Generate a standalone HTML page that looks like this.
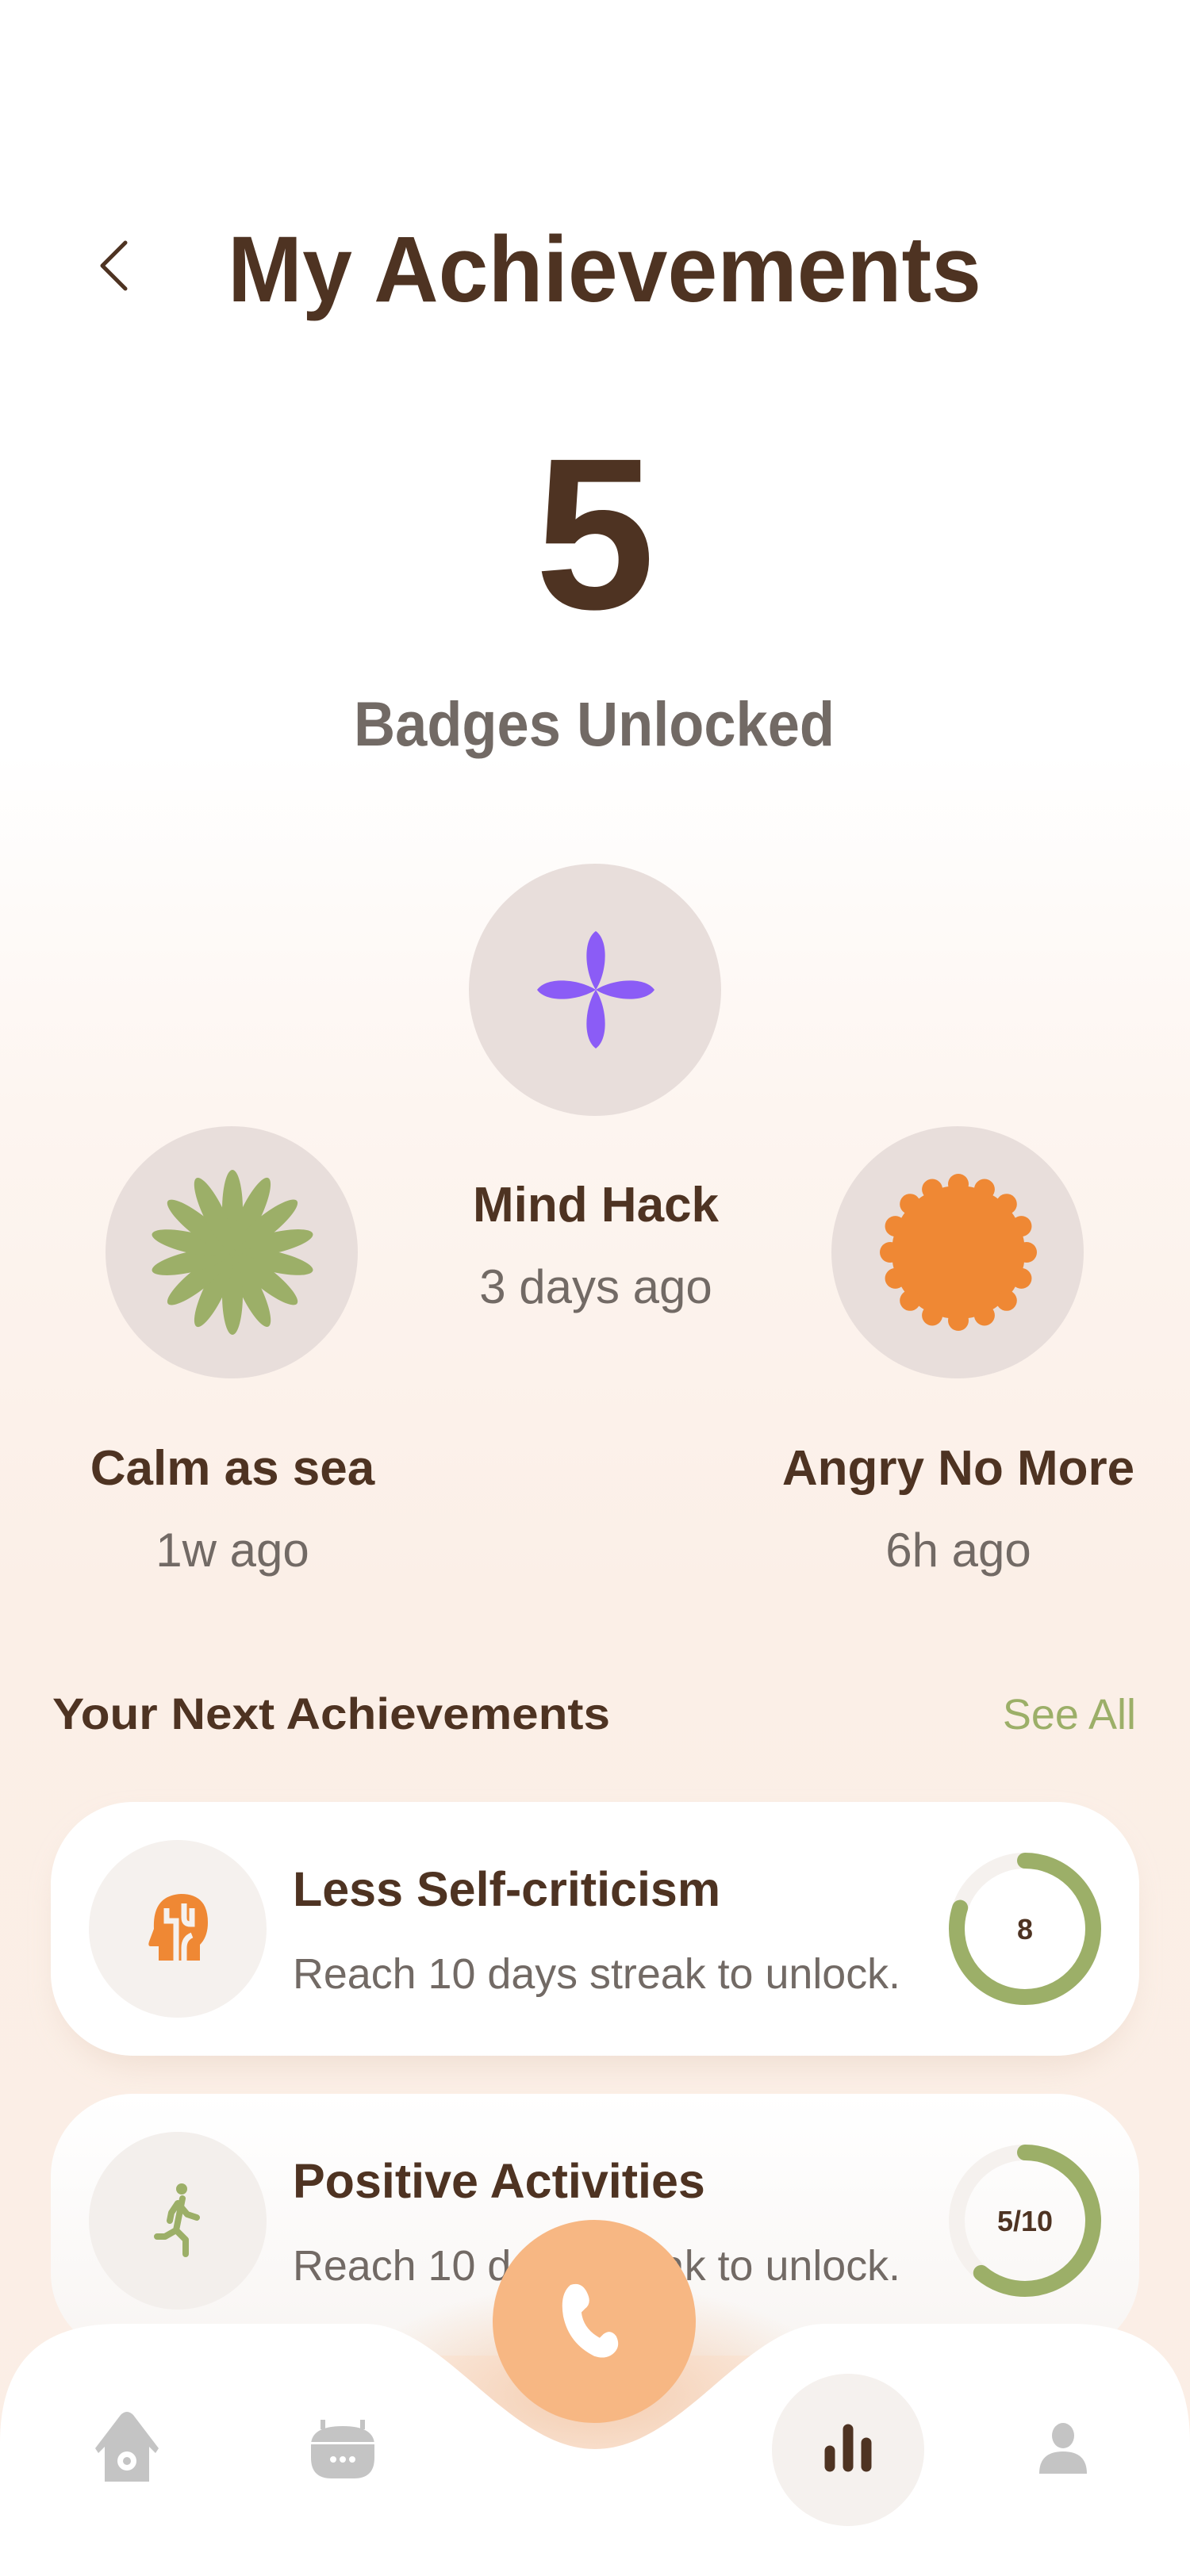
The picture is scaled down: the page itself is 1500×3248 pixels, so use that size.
<!DOCTYPE html>
<html><head><meta charset="utf-8"><style>
html,body{margin:0;padding:0;width:1500px;height:3248px;overflow:hidden}
body{background:linear-gradient(#ffffff 0px,#ffffff 950px,#fdf5f0 1400px,#fbefe7 2000px,#fbeee5 3248px)}
svg{display:block}
text{font-family:"Liberation Sans",sans-serif}
</style></head><body>
<svg width="1500" height="3248" viewBox="0 0 1500 3248" xmlns="http://www.w3.org/2000/svg">
<defs>
<filter id="sh" x="-20%" y="-30%" width="140%" height="160%"><feGaussianBlur stdDeviation="18"/></filter>
<linearGradient id="fade" x1="0" y1="0" x2="0" y2="1"><stop offset="0" stop-color="#fff" stop-opacity="1"/><stop offset="1" stop-color="#f8f5f3" stop-opacity="1"/></linearGradient>
<radialGradient id="glow" cx="0.5" cy="0.5" r="0.5"><stop offset="0" stop-color="#f2c6a6" stop-opacity="0.85"/><stop offset="1" stop-color="#f5c9a6" stop-opacity="0"/></radialGradient>
</defs>

<!-- header -->
<path d="M158 306 L129 335 L158 364" fill="none" stroke="#4e3322" stroke-width="5" stroke-linecap="round" stroke-linejoin="round"/>
<text x="287" y="380" font-size="118" font-weight="700" fill="#4e3322" textLength="950" lengthAdjust="spacingAndGlyphs">My Achievements</text>
<text x="750" y="767" font-size="272" font-weight="700" fill="#4e3322" text-anchor="middle">5</text>
<text x="749" y="940" font-size="79" font-weight="700" fill="#726a65" text-anchor="middle" textLength="606" lengthAdjust="spacingAndGlyphs">Badges Unlocked</text>

<!-- badges -->
<circle cx="750" cy="1248" r="159" fill="#e8dedb"/>
<g transform="translate(751 1248)" fill="#8b5cf6">
<path d="M0 0 C-14 -22 -17 -62 0 -74 C17 -62 14 -22 0 0Z"/>
<path d="M0 0 C-14 -22 -17 -62 0 -74 C17 -62 14 -22 0 0Z" transform="rotate(90)"/>
<path d="M0 0 C-14 -22 -17 -62 0 -74 C17 -62 14 -22 0 0Z" transform="rotate(180)"/>
<path d="M0 0 C-14 -22 -17 -62 0 -74 C17 -62 14 -22 0 0Z" transform="rotate(270)"/>
</g>
<text x="751" y="1540" font-size="62" font-weight="700" fill="#4e3322" text-anchor="middle">Mind Hack</text>
<text x="751" y="1643" font-size="60" fill="#726a65" text-anchor="middle">3 days ago</text>

<circle cx="292" cy="1579" r="159" fill="#e8dedb"/>
<g transform="translate(293 1579)" fill="#9caf68">
<circle r="46"/>
<g id="pet"><ellipse cx="0" cy="-54" rx="13" ry="50"/></g>
<use href="#pet" transform="rotate(25.7)"/><use href="#pet" transform="rotate(51.4)"/><use href="#pet" transform="rotate(77.1)"/><use href="#pet" transform="rotate(102.8)"/><use href="#pet" transform="rotate(128.5)"/><use href="#pet" transform="rotate(154.2)"/><use href="#pet" transform="rotate(180)"/><use href="#pet" transform="rotate(205.7)"/><use href="#pet" transform="rotate(231.4)"/><use href="#pet" transform="rotate(257.1)"/><use href="#pet" transform="rotate(282.8)"/><use href="#pet" transform="rotate(308.5)"/><use href="#pet" transform="rotate(334.2)"/>
</g>
<text x="293" y="1872" font-size="62" font-weight="700" fill="#4e3322" text-anchor="middle">Calm as sea</text>
<text x="293" y="1975" font-size="60" fill="#726a65" text-anchor="middle">1w ago</text>

<circle cx="1207" cy="1579" r="159" fill="#e8dedb"/>
<g transform="translate(1208 1579)" fill="#ef8834">
<circle r="84"/>
<g id="wv"><circle cx="0" cy="-86" r="13"/></g>
<use href="#wv" transform="rotate(22.5)"/><use href="#wv" transform="rotate(45)"/><use href="#wv" transform="rotate(67.5)"/><use href="#wv" transform="rotate(90)"/><use href="#wv" transform="rotate(112.5)"/><use href="#wv" transform="rotate(135)"/><use href="#wv" transform="rotate(157.5)"/><use href="#wv" transform="rotate(180)"/><use href="#wv" transform="rotate(202.5)"/><use href="#wv" transform="rotate(225)"/><use href="#wv" transform="rotate(247.5)"/><use href="#wv" transform="rotate(270)"/><use href="#wv" transform="rotate(292.5)"/><use href="#wv" transform="rotate(315)"/><use href="#wv" transform="rotate(337.5)"/>
</g>
<text x="1208" y="1872" font-size="62" font-weight="700" fill="#4e3322" text-anchor="middle">Angry No More</text>
<text x="1208" y="1975" font-size="60" fill="#726a65" text-anchor="middle">6h ago</text>

<!-- next achievements -->
<text x="66" y="2180" font-size="56" font-weight="700" fill="#4e3322" textLength="703" lengthAdjust="spacingAndGlyphs">Your Next Achievements</text>
<text x="1432" y="2180" font-size="54" fill="#9caf68" text-anchor="end">See All</text>

<!-- card 1 -->
<rect x="74" y="2296" width="1352" height="310" rx="100" fill="#ecd9cc" opacity="0.7" filter="url(#sh)"/>
<rect x="64" y="2272" width="1372" height="320" rx="104" fill="#ffffff"/>
<circle cx="224" cy="2432" r="112" fill="#f5f1ee"/>
<g transform="translate(224 2432)" fill="#ef8834">
<path d="M-24 40 L-24 22 L-34 22 Q-38 22 -36 16 L-30 0 Q-32 -42 4 -44 Q38 -44 38 -8 Q38 10 28 20 L28 40 Z"/>
<path d="M-14 -26 L-14 -10 L-2 -10 L-2 40 M8 -32 L8 -14 Q8 -6 16 -6 L18 -6 L18 -26 M8 40 L8 24 Q8 12 18 8" fill="none" stroke="#f5f1ee" stroke-width="7"/>
</g>
<text x="369" y="2403" font-size="61" font-weight="700" fill="#4e3322">Less Self-criticism</text>
<text x="369" y="2507" font-size="54" fill="#726a65" textLength="766" lengthAdjust="spacingAndGlyphs">Reach 10 days streak to unlock.</text>
<circle cx="1292" cy="2432" r="86" fill="none" stroke="#f5f1ee" stroke-width="20"/>
<circle cx="1292" cy="2432" r="86" fill="none" stroke="#9caf68" stroke-width="20" stroke-linecap="round" stroke-dasharray="432 1000" transform="rotate(-90 1292 2432)"/>
<text x="1292" y="2445" font-size="36" font-weight="700" fill="#4e3322" text-anchor="middle">8</text>

<!-- card 2 -->
<rect x="64" y="2640" width="1372" height="330" rx="104" fill="url(#fade)"/>
<circle cx="224" cy="2800" r="112" fill="#f3efec"/>
<g transform="translate(226 2800)" fill="none" stroke="#9caf68" stroke-width="8" stroke-linecap="round" stroke-linejoin="round">
<circle cx="3" cy="-40" r="7" fill="#9caf68" stroke="none"/>
<path d="M4 -28 L-4 12 L-18 20 L-28 20 M0 -20 L10 -8 L22 -4 M-4 12 L8 24 L8 42 M-2 -22 L-10 -10 L-12 0"/>
</g>
<text x="369" y="2771" font-size="61" font-weight="700" fill="#4e3322">Positive Activities</text>
<text x="369" y="2875" font-size="54" fill="#726a65" textLength="766" lengthAdjust="spacingAndGlyphs">Reach 10 days streak to unlock.</text>
<circle cx="1292" cy="2800" r="86" fill="none" stroke="#f5f1ee" stroke-width="20"/>
<circle cx="1292" cy="2800" r="86" fill="none" stroke="#9caf68" stroke-width="20" stroke-linecap="round" stroke-dasharray="330 1000" transform="rotate(-90 1292 2800)"/>
<text x="1292" y="2813" font-size="36" font-weight="700" fill="#4e3322" text-anchor="middle">5/10</text>

<!-- nav -->
<ellipse cx="750" cy="3020" rx="320" ry="140" fill="url(#glow)"/>
<path d="M0 3248 L0 3080 Q0 2930 150 2930 L460 2930 C560 2930 640 3088 750 3088 C860 3088 940 2930 1040 2930 L1350 2930 Q1500 2930 1500 3080 L1500 3248 Z" fill="#ffffff"/>
<circle cx="749" cy="2927" r="128" fill="#f7b783"/>
<g transform="translate(749 2927) scale(1.15)">
<path d="M-26 -40 Q-38 -30 -34 -6 Q-28 24 0 38 Q12 42 20 36 Q30 28 24 16 Q18 8 10 14 L6 18 Q-12 8 -14 -10 L-10 -14 Q-2 -20 -8 -32 Q-14 -44 -26 -40Z" fill="#ffffff"/>
</g>
<!-- home -->
<g transform="translate(160 3089)" fill="#c4c4c4">
<path d="M-28 40 L-28 -4 L-36 4 L-40 -2 L-8 -44 Q0 -52 8 -44 L40 -2 L36 4 L28 -4 L28 40 Z"/>
<circle cx="0" cy="14" r="12" fill="#fff"/><circle cx="0" cy="14" r="5" fill="#c4c4c4"/>
</g>
<!-- bot -->
<g transform="translate(432 3089)" fill="#c4c4c4">
<rect x="-28" y="-38" width="6" height="12"/><rect x="22" y="-38" width="6" height="12"/>
<path d="M-40 -6 Q-40 -30 0 -30 Q40 -30 40 -6 L40 10 Q40 36 14 36 L-14 36 Q-40 36 -40 10Z"/>
<rect x="-40" y="-10" width="80" height="3" fill="#fff"/>
<circle cx="-12" cy="12" r="4" fill="#fff"/><circle cx="0" cy="12" r="4" fill="#fff"/><circle cx="12" cy="12" r="4" fill="#fff"/>
</g>
<!-- stats -->
<circle cx="1069" cy="3089" r="96" fill="#f5f1ee"/>
<g stroke="#4e3322" stroke-width="13" stroke-linecap="round">
<line x1="1046" y1="3090" x2="1046" y2="3110"/><line x1="1069" y1="3063" x2="1069" y2="3110"/><line x1="1092" y1="3080" x2="1092" y2="3110"/>
</g>
<!-- person -->
<g transform="translate(1340 3089)" fill="#c4c4c4">
<ellipse cx="0" cy="-18" rx="14" ry="16"/>
<path d="M-30 30 Q-30 2 0 2 Q30 2 30 30 Z"/>
</g>
</svg>
</body></html>
